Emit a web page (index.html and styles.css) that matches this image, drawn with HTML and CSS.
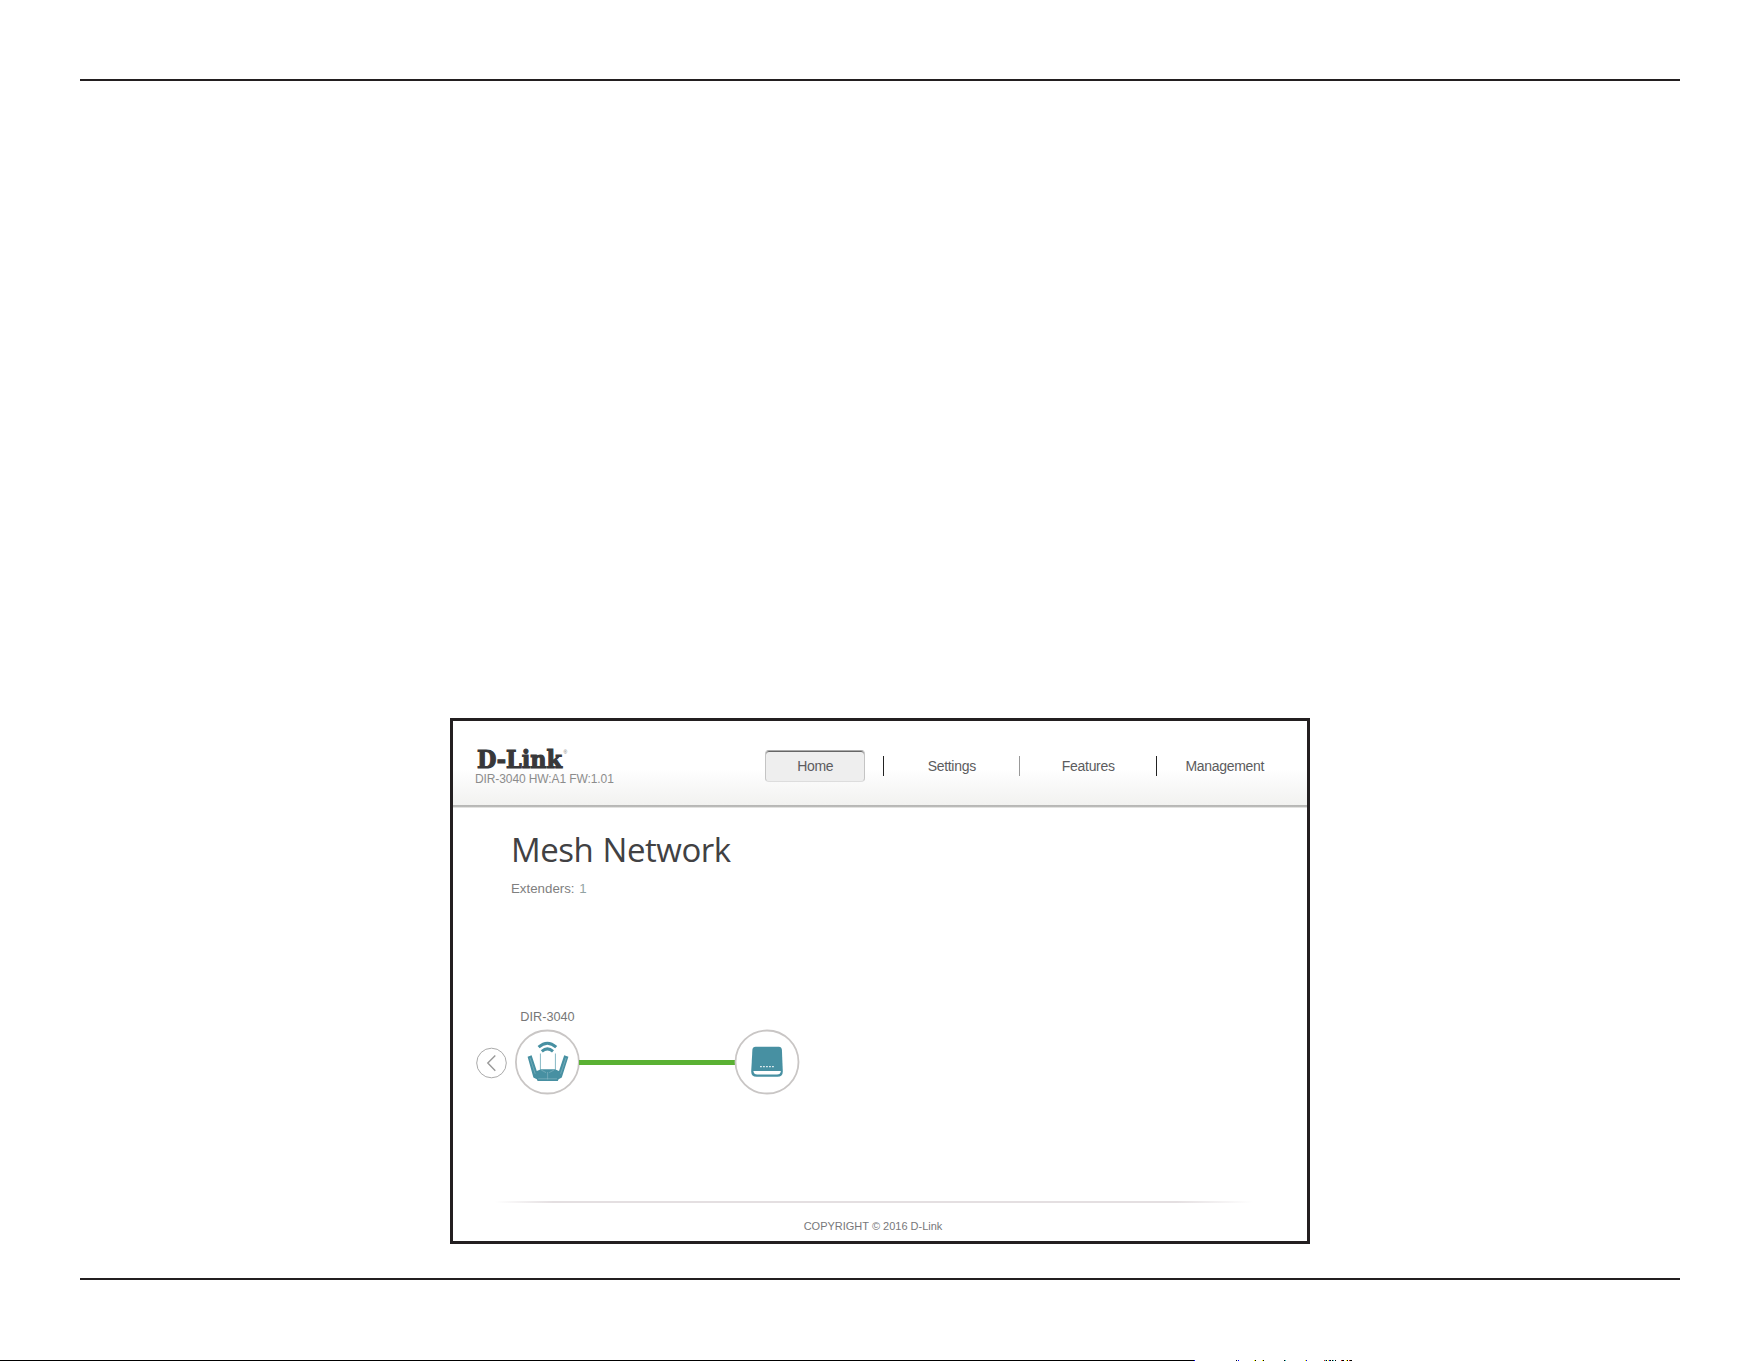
FILE: index.html
```
<!DOCTYPE html>
<html>
  <head>
    <meta charset="utf-8">
    <meta name="viewport" content="width=device-width">
    <title>Mesh Network</title>
    <link rel="stylesheet" href="styles.css">
  </head>
  <body>
    <div class="sheet">
      <div class="frame">
        <header>
          <div class="brand">
            <svg class="logo" width="96" height="31" viewBox="0 -4 96 31">
              <text class="logo-name" x="2" y="20" textLength="85" lengthAdjust="spacingAndGlyphs">D-Link</text>
              <text class="logo-mark" x="88.4" y="6">®</text>
            </svg>
            <div class="version">DIR-3040 HW:A1 FW:1.01</div>
          </div>
          <nav>
            <a class="active">Home</a>
            <a>Settings</a>
            <a class="light">Features</a>
            <a>Management</a>
          </nav>
        </header>
        <main>
          <h1>Mesh Network</h1>
          <p>Extenders: <span>1</span></p>
        </main>
        <div class="mesh">
          <svg class="back" width="32" height="32" viewBox="0 0 32 32">
            <circle cx="16.5" cy="16" r="14.8"/>
            <path d="M20.3 8.5 L12.8 16 L20.3 23.8"/>
          </svg>
          <div class="node">
            <div class="label">DIR-3040</div>
            <svg width="66" height="66" viewBox="0 0 66 66">
              <circle class="ring" cx="33.4" cy="33" r="31.5"/>
              <g class="waves">
                <path d="M24.6 18.2 Q33.4 10.2 42.2 18.2"/>
                <path d="M27.8 22.4 Q33.4 17.4 39 22.4"/>
              </g>
              <path class="antenna" d="M26.4 24.5 V42 M41.4 24.5 V42"/>
              <path class="fill" d="M13.6 27.8 L17.6 26.2 L22.8 42 L27 40.2 H40.8 L45 42 L50.2 26.2 L54.4 27.8 L47.8 48.4 L44.6 50.2 L43.8 52 H23.6 L22.8 50.2 L19.4 48.4 Z"/>
              <path class="detail" d="M16 29 L21.2 44.8 M52 29 L46.6 44.8 M27.2 41 L32 43.6 M40 41 L35.2 43.6 M33.6 43 V50.4 M24.2 49.8 H43"/>
            </svg>
          </div>
          <div class="link"></div>
          <div class="node">
            <svg width="66" height="66" viewBox="0 0 66 66">
              <circle class="ring" cx="33" cy="33" r="31.5"/>
              <path class="fill" d="M21.6 17.8 H44.8 Q47.6 17.8 47.9 20.8 L48.8 42.4 Q48.8 47.8 43.4 47.8 H22.6 Q17.2 47.8 17.2 42.4 L18.4 20.8 Q18.7 17.8 21.6 17.8 Z"/>
              <path class="slot" d="M19.4 42 H46.9 Q46.5 45.6 43 45.6 H23.2 Q19.8 45.6 19.4 42 Z"/>
              <path class="dots" d="M26.2 37.6 H40"/>
            </svg>
          </div>
        </div>
        <footer>COPYRIGHT © 2016 D-Link</footer>
      </div>
    </div>
    <svg class="edge" width="1761" height="1" viewBox="0 0 1761 1">
      <path stroke="#000" d="M0 .5 H1194 M1236 .5 h1 M1255 .5 h1 M1263 .5 h1 M1284 .5 h1 M1326 .5 h1 M1330 .5 h1 M1332 .5 h1 M1335 .5 h1 M1342 .5 h2 M1347 .5 h1 M1350 .5 h2"/>
      <path stroke="#00f" d="M1194 .5 h1 M1238 .5 h1 M1306 .5 h1 M1329 .5 h1"/>
      <path stroke="#ff0" d="M1254 .5 h1 M1262 .5 h1 M1305 .5 h1 M1328 .5 h1 M1346 .5 h1"/>
      <path stroke="#3cc" d="M1285 .5 h1 M1325 .5 h1 M1333 .5 h1"/>
      <path stroke="#c22" d="M1324 .5 h1 M1341 .5 h1 M1349 .5 h1"/>
    </svg>
  </body>
</html>
```

FILE: styles.css
```
* {
  box-sizing: border-box;
  margin: 0;
  padding: 0;
}
body {
  width: 1761px;
  height: 1361px;
  background: #fff;
  font-family: "Liberation Sans", Arial, sans-serif;
  padding-top: 79px;
  display: flex;
  flex-direction: column;
  justify-content: space-between;
  overflow: hidden;
}
.sheet {
  width: 1600px;
  height: 1201px;
  margin-left: 80px;
  border-top: 2px solid #231f20;
  border-bottom: 2px solid #231f20;
  padding: 637px 0 0 370px;
}
.frame {
  width: 860px;
  height: 526px;
  border: 3px solid #231f20;
  display: flex;
  flex-direction: column;
}
header {
  height: 87px;
  flex: none;
  display: flex;
  justify-content: space-between;
  padding: 23px 14px 0 22px;
  background: linear-gradient(#fff 0, #fff 48px, #fbfbfb 58px, #f2f2f0 84px, #b5b5b3 84px, #bcbcba 86px, #e2e2e0 86px);
}
.logo {
  display: block;
}
.logo-name {
  font: bold 24px "DejaVu Serif", serif;
  fill: #38383a;
  stroke: #38383a;
  stroke-width: 1.2px;
}
.logo-mark {
  font-size: 5px;
  fill: #777;
}
.version {
  margin-top: -3px;
  font-size: 12px;
  line-height: 14px;
  letter-spacing: -0.1px;
  color: #8c8c8c;
  white-space: nowrap;
}
nav {
  display: grid;
  grid-template-columns: repeat(4, 136.5px);
  margin-top: 4px;
  height: 36px;
  align-items: center;
}
nav a {
  position: relative;
  width: 100px;
  height: 32px;
  justify-self: center;
  border: 1px solid transparent;
  font-size: 14px;
  line-height: 31px;
  letter-spacing: -0.3px;
  text-align: center;
  color: #5c5c5e;
}
nav a.active {
  background: #eee;
  border-color: #aaa #c4c4c4 #ddd;
  border-radius: 4px;
  box-shadow: inset 0 1px #666;
}
/* separator in the gap before each item */
nav a + a::before {
  content: "";
  position: absolute;
  left: -20px;
  top: 5px;
  width: 1px;
  height: 20px;
  background: #222;
}
nav a.light::before {
  background: #999;
}
main {
  height: 191px;
  padding: 17px 0 0 58px;
}
h1 {
  font: 400 33px/50px "Open Sans", sans-serif;
  letter-spacing: -0.45px;
  word-spacing: 1px;
  color: #414143;
}
main p {
  margin-top: 6px;
  font-size: 13.3px;
  line-height: 16px;
  color: #808080;
}
main span {
  margin-left: 1px;
  color: #92a3a3;
}
.mesh {
  display: flex;
  align-items: flex-end;
  height: 96px;
  padding-left: 22px;
}
.mesh svg {
  display: block;
}
.back {
  margin-bottom: 16px;
}
.back circle {
  fill: #fff;
  stroke: #aaa;
  stroke-width: 1;
}
.back path {
  fill: none;
  stroke: #999;
  stroke-width: 1.4;
}
.node {
  width: 66px;
  margin-left: 7px;
}
.link + .node {
  margin-left: -1px;
}
.label {
  margin-bottom: 4px;
  padding-left: 1px;
  font-size: 12.7px;
  line-height: 16px;
  text-align: center;
  color: #777;
}
.link {
  width: 156px;
  height: 5px;
  margin: 0 0 30px -1px;
  background: #5ab133;
}
.ring {
  fill: #fff;
  stroke: #c9c6c5;
  stroke-width: 1.8;
}
.fill {
  fill: #4790a2;
}
.waves {
  fill: none;
  stroke: #4790a2;
  stroke-width: 3;
}
.antenna {
  stroke: #86b8c4;
  stroke-width: 1;
}
.detail {
  fill: none;
  stroke: #8cb9c4;
  stroke-width: 0.6;
}
.slot {
  fill: #fff;
}
.dots {
  stroke: #fff;
  stroke-width: 1.3;
  stroke-dasharray: 1.5;
}
footer {
  margin-top: 106px;
  padding: 19px 14px 0 0;
  height: 40px;
  font-size: 11px;
  line-height: 13px;
  text-align: center;
  color: #77777a;
  background: linear-gradient(90deg, transparent 42px, #e4dfe1 100px, #e4dfe1 723px, transparent 800px) no-repeat 0 0 / 100% 2px;
}
.edge {
  display: block;
}
```
